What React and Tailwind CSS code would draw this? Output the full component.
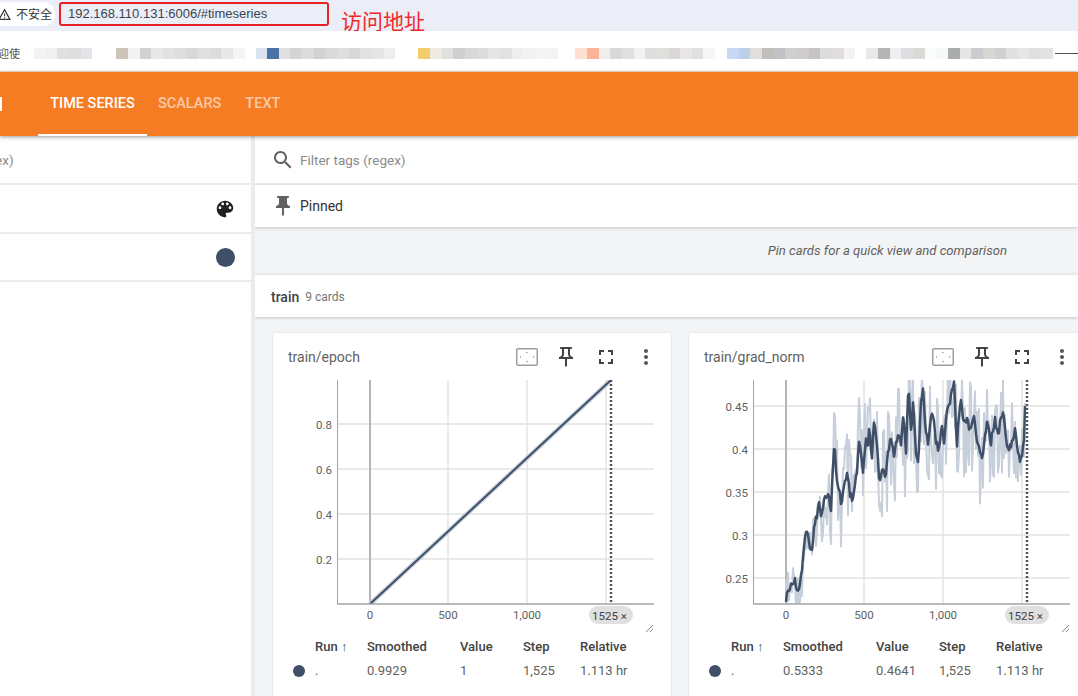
import React from "react";

const PATHS = {
  search:
    "M15.5 14h-.79l-.28-.27C15.41 12.59 16 11.11 16 9.5 16 5.91 13.09 3 9.5 3S3 5.91 3 9.5 5.91 16 9.5 16c1.61 0 3.09-.59 4.23-1.57l.27.28v.79l5 4.99L20.49 19l-4.99-5zm-6 0C7.01 14 5 11.99 5 9.5S7.01 5 9.5 5 14 7.01 14 9.5 11.99 14 9.5 14z",
  palette:
    "M12 3c-4.97 0-9 4.03-9 9s4.03 9 9 9c.83 0 1.5-.67 1.5-1.5 0-.39-.15-.74-.39-1.01-.23-.26-.38-.61-.38-.99 0-.83.67-1.5 1.5-1.5H16c2.76 0 5-2.24 5-5 0-4.42-4.03-8-9-8zm-5.5 9c-.83 0-1.5-.67-1.5-1.5S5.67 9 6.5 9 8 9.67 8 10.5 7.33 12 6.5 12zm3-4C8.67 8 8 7.33 8 6.5S8.67 5 9.5 5s1.5.67 1.5 1.5S10.33 8 9.5 8zm5 0c-.83 0-1.5-.67-1.5-1.5S13.67 5 14.5 5s1.5.67 1.5 1.5S15.33 8 14.5 8zm3 4c-.83 0-1.5-.67-1.5-1.5S16.67 9 17.5 9s1.5.67 1.5 1.5-.67 1.5-1.5 1.5z",
  pinFilled:
    "M16 9V4h1c.55 0 1-.45 1-1s-.45-1-1-1H7c-.55 0-1 .45-1 1s.45 1 1 1h1v5c0 1.66-1.34 3-3 3v2h5.97v7l1 1 1-1v-7H19v-2c-1.66 0-3-1.34-3-3z",
  pinOutline:
    "M14 4v5c0 1.12.37 2.16 1 3H9c.65-.86 1-1.9 1-3V4h4m3-2H7c-.55 0-1 .45-1 1s.45 1 1 1h1v5c0 1.66-1.34 3-3 3v2h5.97v7l1 1 1-1v-7H19v-2c-1.66 0-3-1.34-3-3V4h1c.55 0 1-.45 1-1s-.45-1-1-1z",
  fullscreen:
    "M7 14H5v5h5v-2H7v-3zm-2-4h2V7h3V5H5v5zm12 7h-3v2h5v-5h-2v3zM14 5v2h3v3h2V5h-5z",
  more:
    "M12 8c1.1 0 2-.9 2-2s-.9-2-2-2-2 .9-2 2 .9 2 2 2zm0 2c-1.1 0-2 .9-2 2s.9 2 2 2 2-.9 2-2-.9-2-2-2zm0 6c-1.1 0-2 .9-2 2s.9 2 2 2 2-.9 2-2-.9-2-2-2z",
};

const Icon = ({ name, className }) => (
  <svg viewBox="0 0 24 24" className={className} fill="currentColor">
    <path d={PATHS[name]} />
  </svg>
);

// mosaic that hides the bookmarks
const BOOKMARKS = [
  { gap: "ml-[14px]", blocks: ["bg-[#f3f3f3]", "bg-[#f0f0f0]", "bg-[#e0e0e0]", "bg-[#dedede]", "bg-[#e3e5e8]"] },
  { gap: "ml-[24px]", blocks: ["bg-[#cdc6b6]", "bg-[#f3f2f0]", "bg-[#d2d2d2]", "bg-[#e8e8e8]", "bg-[#e2e2e2]", "bg-[#dedede]", "bg-[#d8d8d8]", "bg-[#e0e0e0]", "bg-[#dcdcdc]", "bg-[#e8e8e8]", "bg-[#f4f4f4]"] },
  { gap: "ml-[11px]", blocks: ["bg-[#dce3ee]", "bg-[#4a72a5]", "bg-[#e0e0e2]", "bg-[#d4d4d6]", "bg-[#dcdcdc]", "bg-[#d2d2d4]", "bg-[#dadada]", "bg-[#dedede]", "bg-[#d8d8d8]", "bg-[#e2e2e2]", "bg-[#e6e6e6]", "bg-[#eeeeee]"] },
  { gap: "ml-[23px]", blocks: ["bg-[#f3cc6e]", "bg-[#efeadf]", "bg-[#e0e0e0]", "bg-[#cfcfd2]", "bg-[#d8d8d8]", "bg-[#dcdcdc]", "bg-[#e6e6e6]", "bg-[#e2e2e2]", "bg-[#eeeeee]", "bg-[#f2f2f2]", "bg-[#f4f4f4]", "bg-[#f3f3f3]"] },
  { gap: "ml-[17px]", blocks: ["bg-[#ffe0d0]", "bg-[#fbb39a]", "bg-[#eeeeec]", "bg-[#d8d8d8]", "bg-[#dfe1df]", "bg-[#f2f2f2]", "bg-[#dddddc]", "bg-[#dfe0dd]", "bg-[#dad9d7]", "bg-[#e8e6e6]", "bg-[#e0e0e0]", "bg-[#f6f6f6]"] },
  { gap: "ml-[12px]", blocks: ["bg-[#c8d8f5]", "bg-[#bcd0e8]", "bg-[#e0dfdc]", "bg-[#c0bfbc]", "bg-[#c2c2c4]", "bg-[#d0cfcf]", "bg-[#cdccca]", "bg-[#c6c4c4]", "bg-[#dcdcde]", "bg-[#e0dce0]", "bg-[#f2f4f4]"] },
  { gap: "ml-[11px]", blocks: ["bg-[#e8e8e8]", "bg-[#b5b5b7]", "bg-[#f0eeee]", "bg-[#dcdde0]", "bg-[#dad9d6]", "bg-[#fafbfb]", "bg-[#f7f8f8]", "bg-[#abacae]", "bg-[#e6e6e6]", "bg-[#cdcbce]", "bg-[#d6d6d3]", "bg-[#d0d1d3]", "bg-[#e0e0e2]", "bg-[#e6e6e6]", "bg-[#dfdfdf]", "bg-[#e2e2e2]"] },
];

// traced by eye from the reference, in card-chart coordinates
const GRAD_TRACE = [
  [257,690],[262,645],[268,660],[275,625],[285,615],[293,655],[300,620],[306,590],[312,525],[320,458],[328,510],[335,540],[345,440],[352,420],[358,390],[365,425],[372,380],[385,370],[393,405],[398,300],[403,197],[408,290],[416,340],[424,395],[435,310],[442,300],[450,360],[460,375],[470,300],[478,195],[490,300],[497,190],[503,230],[508,160],[515,260],[523,125],[530,200],[538,320],[548,270],[556,320],[563,240],[572,190],[582,245],[595,170],[603,215],[610,115],[618,250],[625,35],[633,175],[640,80],[648,235],[655,255],[662,100],[668,40],[678,180],[685,210],[693,125],[700,120],[708,205],[716,230],[725,150],[732,200],[740,105],[748,100],[755,50],[762,20],[770,220],[782,60],[790,150],[800,130],[810,170],[822,130],[832,210],[848,245],[862,130],[872,210],[885,130],[893,190],[903,130],[912,125],[922,225],[935,215],[945,165],[955,245],[963,258],[972,195],[978,20],
].map(([x, y]) => [12 + x / 3, y / 3 - 6]);

const toPath = (pts) => pts.map(([x, y], i) => `${i ? "L" : "M"}${x.toFixed(1)} ${y.toFixed(1)}`).join(" ");

const traceAt = (x) => {
  for (let i = 1; i < GRAD_TRACE.length; i++) {
    const [x0, y0] = GRAD_TRACE[i - 1];
    const [x1, y1] = GRAD_TRACE[i];
    if (x <= x1) return y0 + ((y1 - y0) * (x - x0)) / (x1 - x0);
  }
  return 0;
};

// fixed hash noise in -0.5..0.5, so every render draws the same picture
const noise = (i) => {
  const v = Math.sin(i * 12.9898) * 43758.5453;
  return v - Math.floor(v) - 0.5;
};

// raw series: spiky noise round the smoothed line
const GRAD_RAW = (() => {
  const pts = [];
  let i = 0;
  for (let x = 98; x < 338; x += 1) {
    const spread = x < 140 ? 50 : 105;
    pts.push([x, Math.min(226, traceAt(x) + 4 + noise(i++) * spread)]);
  }
  return pts;
})();

const GRAD_SMOOTH = (() => {
  const pts = [];
  let i = 500;
  for (let x = 98; x < 338; x += 1) {
    pts.push([x, traceAt(x) + noise(i++) * 8]);
  }
  return pts;
})();

const CHARTS = [
  {
    title: "train/epoch",
    yTicks: [
      { y: 44, label: "0.8" },
      { y: 89, label: "0.6" },
      { y: 134, label: "0.4" },
      { y: 179, label: "0.2" },
    ],
    raw: "M98 224 L339 0",
    smooth: "M98 224 L339 0",
    rawWidth: 4.5,
    smoothWidth: 2,
    smoothed: "0.9929",
    value: "1",
  },
  {
    title: "train/grad_norm",
    yTicks: [
      { y: 26, label: "0.45" },
      { y: 69, label: "0.4" },
      { y: 112, label: "0.35" },
      { y: 155, label: "0.3" },
      { y: 198, label: "0.25" },
    ],
    raw: toPath(GRAD_RAW),
    smooth: toPath(GRAD_SMOOTH),
    rawWidth: 2,
    smoothWidth: 2.5,
    smoothed: "0.5333",
    value: "0.4641",
  },
];

const FitIcon = () => (
  <svg viewBox="0 0 22 18" className="h-[18px] w-[22px]" fill="none">
    <rect x="0.75" y="0.75" width="20.5" height="16.5" rx="1" stroke="#9e9e9e" strokeWidth="1.5" />
    <path d="M11 3.5 L9.8 5 H12.2Z M11 14.5 L9.8 13 H12.2Z M3.5 9 L5 7.8 V10.2Z M18.5 9 L17 7.8 V10.2Z" fill="#9e9e9e" />
  </svg>
);

const Plot = ({ chart, id }) => (
  <svg width="400" height="255" className="-ml-px block" fontFamily="Roboto, sans-serif">
    <defs>
      <clipPath id={id}>
        <rect x="65" y="0" width="317" height="224" />
      </clipPath>
    </defs>
    {[176, 255, 334].map((x) => (
      <line key={x} x1={x} x2={x} y1="0" y2="224" stroke="#d6d6d6" />
    ))}
    {chart.yTicks.map((t) => (
      <g key={t.label}>
        <line x1="65" x2="382" y1={t.y} y2={t.y} stroke="#e2e2e2" strokeWidth="1.5" />
        <text x="60" y={t.y + 5} textAnchor="end" fontSize="11.5" fill="#616161">{t.label}</text>
      </g>
    ))}
    <line x1="98" x2="98" y1="0" y2="224" stroke="#b4b4b4" strokeWidth="2" />
    <g clipPath={`url(#${id})`} fill="none" strokeLinejoin="round">
      <path d={chart.raw} stroke="#c6cfda" strokeWidth={chart.rawWidth} />
      <path d={chart.smooth} stroke="#3f4f68" strokeWidth={chart.smoothWidth} />
    </g>
    <line x1="339" x2="339" y1="0" y2="224" stroke="#555555" strokeWidth="2.5" strokeDasharray="2 2" />
    <line x1="65.5" x2="65.5" y1="0" y2="224" stroke="#a3a3a3" />
    <line x1="65" x2="382" y1="224" y2="224" stroke="#a3a3a3" strokeWidth="1.5" />
    {[
      [98, "0"],
      [176, "500"],
      [255, "1,000"],
    ].map(([x, label]) => (
      <text key={label} x={x} y="239" textAnchor="middle" fontSize="11.5" fill="#616161">{label}</text>
    ))}
    <rect x="317" y="226" width="44" height="18" rx="9" fill="#e0e0e0" />
    <text x="320" y="239.5" fontSize="11.5" fill="#424242">1525 ×</text>
    <path d="M374 252 L381 245 M378 252 L381 249" stroke="#757575" strokeWidth="0.9" />
  </svg>
);

const Card = ({ chart, id }) => (
  <div className="h-[420px] w-[400px] shrink-0 rounded border border-[#ebebeb] bg-white">
    <div className="flex h-[47px] items-center pl-[15px] pt-[1px]">
      <span className="flex-1 text-sm text-[#616161]">{chart.title}</span>
      <div className="flex items-center gap-4 pr-[13px]">
        <FitIcon />
        <Icon name="pinOutline" className="h-6 w-6 text-[#424242]" />
        <Icon name="fullscreen" className="h-6 w-6 text-[#424242]" />
        <Icon name="more" className="h-6 w-6 text-[#555555]" />
      </div>
    </div>
    <Plot chart={chart} id={id} />
    <div className="grid grid-cols-[25px_52px_93px_63px_57px_1fr] pl-[17px] text-[13px] leading-6">
      <span />
      <span className="font-medium text-[#424242]">Run ↑</span>
      <span className="font-medium text-[#424242]">Smoothed</span>
      <span className="font-medium text-[#424242]">Value</span>
      <span className="font-medium text-[#424242]">Step</span>
      <span className="font-medium text-[#424242]">Relative</span>
      <span className="flex items-center pl-[3px]">
        <span className="h-3 w-3 rounded-full bg-[#3f4f68]" />
      </span>
      <span className="text-[#616161]">.</span>
      <span className="text-[#616161]">{chart.smoothed}</span>
      <span className="text-[#616161]">{chart.value}</span>
      <span className="text-[#616161]">1,525</span>
      <span className="text-[#616161]">1.113 hr</span>
    </div>
  </div>
);

const App = () => (
  <div className="flex h-[696px] w-[1078px] flex-col overflow-hidden bg-white font-['Roboto',sans-serif]">
    {/* address bar */}
    <div className="flex h-[31px] shrink-0 items-start bg-[#ebeef7] pt-[2px]">
      <div className="flex h-6 w-[55px] items-center rounded-r-xl bg-white text-xs text-[#333333] font-['Noto_Sans_CJK_SC',sans-serif]">
        <svg viewBox="0 0 12 12" className="h-[13px] w-[13px] shrink-0 -translate-x-[2px]" fill="none">
          <path d="M6 1.5 L11 10.5 H1 Z" stroke="#333333" strokeWidth="1.1" />
          <path d="M6 5 V7.7 M6 8.6 V9.5" stroke="#333333" />
        </svg>
        <span className="ml-[3px] whitespace-nowrap">不安全</span>
      </div>
      <div className="ml-1 flex h-[24px] w-[270px] items-center rounded-[3px] border-2 border-[#e8202a] pl-[7px] font-['Liberation_Sans',sans-serif] text-[13px] text-[#3c4450]">
        192.168.110.131:6006/#timeseries
      </div>
      <span className="ml-[12px] mt-[5px] text-[21px] leading-[26px] text-[#f02a2a] font-['Noto_Sans_CJK_SC',sans-serif]">访问地址</span>
    </div>

    {/* bookmarks, blurred out in the screenshot */}
    <div className="flex h-[41px] shrink-0 items-center overflow-hidden border-b border-[#f3e0d0] bg-white pt-[5px]">
      <span className="w-[20px] shrink-0 -translate-x-[2px] whitespace-nowrap text-[11px] text-[#555555] font-['Noto_Sans_CJK_SC',sans-serif]">迎使</span>
      {BOOKMARKS.map((group) => (
        <div key={group.gap + group.blocks[0]} className={`flex shrink-0 ${group.gap}`}>
          {group.blocks.map((color, i) => (
            <span key={i} className={`h-[11px] w-[11.67px] ${color}`} />
          ))}
        </div>
      ))}
      <span className="ml-[2px] h-px w-6 shrink-0 bg-[#555555]" />
    </div>

    {/* tensorboard toolbar */}
    <div className="z-10 flex h-16 shrink-0 bg-[#f67c23] shadow-[0_1px_4px_rgba(0,0,0,0.4)]">
      <span className="mt-[25px] h-[14px] w-[2px] bg-white" />
      <div className="ml-9 flex h-16 w-[109px] items-center justify-center border-b-2 border-white pt-[2px] text-[14.5px] font-medium text-white">TIME SERIES</div>
      <div className="ml-[11px] flex h-16 items-center text-[14.5px] font-medium text-white/60">SCALARS</div>
      <div className="ml-[24px] flex h-16 items-center text-[14.5px] font-medium text-white/60">TEXT</div>
    </div>

    <div className="flex min-h-0 flex-1 bg-[#ebebeb]">
      {/* runs sidebar, cut off on the left */}
      <div className="mr-1 w-[251px] shrink-0 overflow-hidden bg-white">
        <div className="flex h-[49px] items-center border-b-2 border-[#ebebeb] pt-[1px] text-[13.5px] text-[#8a8a8a]">
          <span className="-ml-[92px] whitespace-nowrap">Filter runs (regex)</span>
        </div>
        <div className="flex h-[49px] items-center justify-end border-b-2 border-[#ebebeb] pr-[15px] pt-[1px]">
          <Icon name="palette" className="h-[22px] w-[22px] text-[#212121]" />
        </div>
        <div className="flex h-[48px] items-center justify-end border-b-2 border-[#ebebeb] pr-[16px] pt-[1px]">
          <span className="h-[19px] w-[19px] rounded-full bg-[#3f4f68]" />
        </div>
      </div>

      {/* main pane */}
      <div className="min-w-0 flex-1 overflow-hidden bg-[#f3f4f6]">
        <div className="flex h-[49px] items-center border-b-2 border-[#ebebeb] bg-white pl-[16px] pt-[1px]">
          <Icon name="search" className="h-6 w-6 text-[#616161]" />
          <span className="ml-[5px] text-[13.5px] text-[#8a8a8a]">Filter tags (regex)</span>
        </div>
        <div className="flex h-[42px] items-center bg-white pl-[16px] shadow-[0_1px_3px_rgba(0,0,0,0.2)]">
          <Icon name="pinFilled" className="h-6 w-6 text-[#616161]" />
          <span className="ml-[5px] text-sm text-[#333333]">Pinned</span>
        </div>
        <div className="flex h-[47px] items-center justify-end pr-[71px] text-[13.1px] italic text-[#616161]">
          Pin cards for a quick view and comparison
        </div>
        <div className="flex h-[43px] items-center gap-[6px] border-t border-[#e6e6e6] bg-white pl-4 pt-[2px] shadow-[0_1px_3px_rgba(0,0,0,0.2)]">
          <span className="text-sm font-medium text-[#424242]">train</span>
          <span className="text-xs text-[#757575]">9 cards</span>
        </div>
        <div className="flex gap-4 pl-[17px] pt-[15px]">
          {CHARTS.map((chart, i) => (
            <Card key={chart.title} chart={chart} id={`plot-${i}`} />
          ))}
        </div>
      </div>
    </div>
  </div>
);

export default App;
